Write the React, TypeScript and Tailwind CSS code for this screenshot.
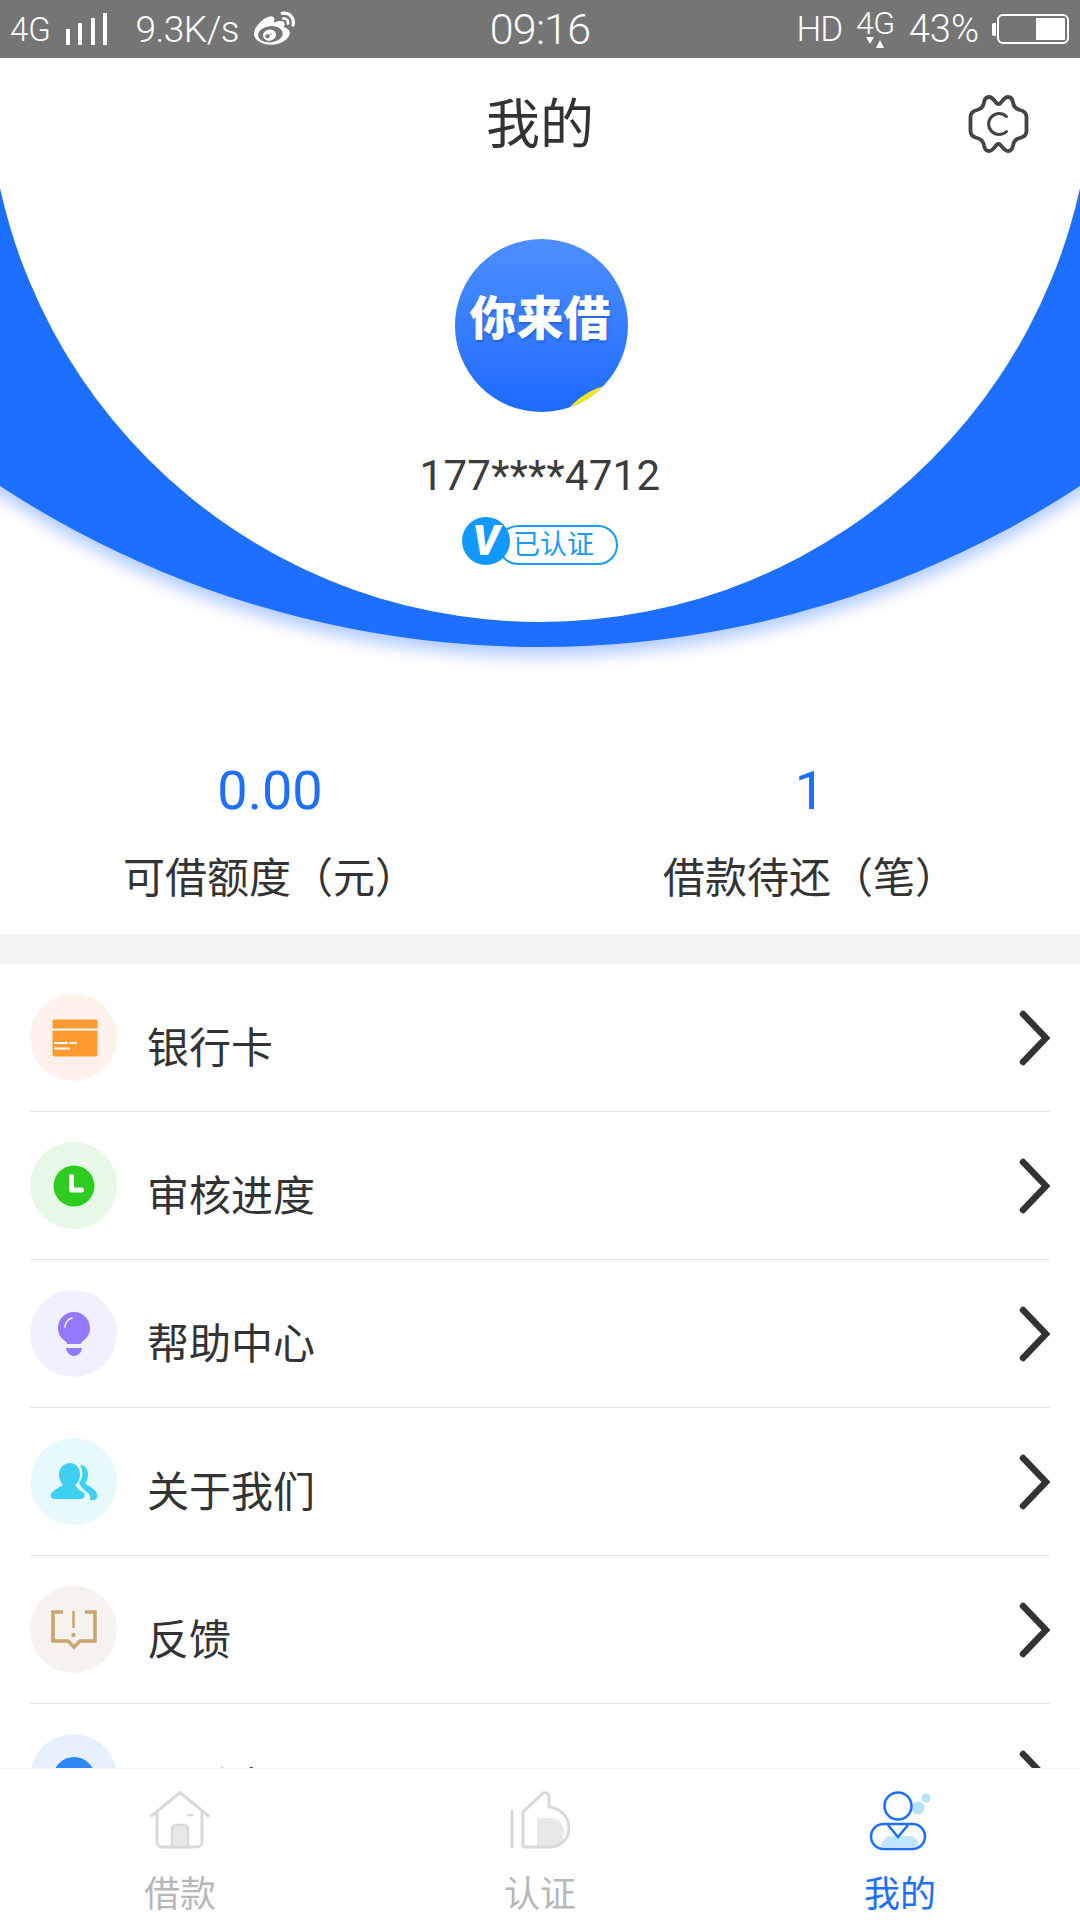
import React from "react";
import { FaWeibo } from "react-icons/fa";

const CardIcon = () => (
	<svg width="46" height="38" viewBox="0 0 46 38" className="ml-[3px]">
		<rect x="0.5" y="0.5" width="45" height="37" rx="2" fill="#ff9a33" />
		<rect x="0" y="9.5" width="46" height="2" fill="#fff" />
		<path d="M3 24h12M18 24h6M3 29.5h14" stroke="#fff" strokeWidth="2" strokeLinecap="round" />
	</svg>
);

const ClockIcon = () => (
	<svg width="42" height="42" viewBox="0 0 42 42">
		<circle cx="21" cy="21" r="20.5" fill="#2ecb20" />
		<path d="M18.500 11.500v13.500h10" fill="none" stroke="#fff" strokeWidth="5" strokeLinecap="round" strokeLinejoin="round" />
	</svg>
);

const BulbIcon = () => (
	<svg width="32" height="44" viewBox="0 0 32 44">
		<path d="M16 0C7 0 0 7 0 16c0 6 3 10 7 13 1.500 1 2 2 2 3h14c0-1 .5-2 2-3 4-3 7-7 7-13C32 7 25 0 16 0z" fill="#9479ff" />
		<path d="M8 36h16c0 4-4 8-8 8s-8-4-8-8z" fill="#9479ff" />
		<path d="M7 15c0-4 3-8 7-9" fill="none" stroke="#fff" strokeWidth="1.500" strokeLinecap="round" />
	</svg>
);

const PeopleIcon = () => (
	<svg width="48" height="38" viewBox="0 0 48 38">
		<path d="M20 0c6 0 10 5 10 11 0 5-2 9-5 11 2 3 5 6 9 8 1 1 1 6-3 6H5c-4 0-5-3-4-5 2-4 9-7 12-9-3-3-4-7-4-11C9 5 14 0 20 0z" fill="#3ed0f3" />
		<path d="M30 2c5 0 8 4 8 9 0 4-1 7-3 9 3 3 11 6 12 11 1 4-1 6-4 6h-3c1-3 0-6-3-8-4-3-6-5-8-9 3-4 4-8 3-12 0-2-1-4-2-6z" fill="#3ed0f3" />
	</svg>
);

const FeedbackIcon = () => (
	<svg width="46" height="40" viewBox="0 0 46 40">
		<path d="M12 2H2v29h15l6 6 6-6h15V2H34" fill="none" stroke="#c9a56f" strokeWidth="3.500" />
		<path d="M22.500 1v17" stroke="#c9a56f" strokeWidth="2.500" />
		<circle cx="22.500" cy="25" r="2.200" fill="#c9a56f" />
	</svg>
);

const ServiceIcon = () => <div className="h-[42px] w-[42px] rounded-full bg-[#2f86f6]" />;

const menu = [
	{ label: "银行卡", bg: "bg-[#fff2ec]", icon: <CardIcon /> },
	{ label: "审核进度", bg: "bg-[#e8f8e6]", icon: <ClockIcon /> },
	{ label: "帮助中心", bg: "bg-[#f2f0ff]", icon: <BulbIcon /> },
	{ label: "关于我们", bg: "bg-[#e8f9fe]", icon: <PeopleIcon /> },
	{ label: "反馈", bg: "bg-[#f6f3ee]", icon: <FeedbackIcon /> },
	{ label: "联系客服", bg: "bg-[#e6f1fd]", icon: <ServiceIcon /> },
];

const Chevron = () => (
	<svg width="34" height="56" viewBox="0 0 34 56" className="shrink-0">
		<path d="M7 4l23 24L7 52" fill="none" stroke="#333" strokeWidth="6.500" strokeLinecap="round" strokeLinejoin="miter" />
	</svg>
);

const StatusBar = () => (
	<div className="grid h-[58px] shrink-0 grid-cols-[1fr_auto_1fr] items-center bg-[#757575] font-light text-white">
		<div className="flex items-center pl-[10px]">
			<span className="text-[33px] leading-none">4G</span>
			<div className="ml-[15px] flex h-[32px] items-end gap-[8.500px]">
				<div className="h-[16px] w-[4px] bg-white" />
				<div className="h-[22px] w-[4px] bg-white" />
				<div className="h-[27px] w-[4px] bg-white" />
				<div className="h-[32px] w-[4px] bg-white" />
			</div>
			<span className="ml-[28px] text-[37px] leading-none tracking-[-0.5px]">9.3K/s</span>
			<FaWeibo className="ml-[15px] text-[41px]" />
		</div>
		<span className="text-[43px] leading-none tracking-[-0.8px]">09:16</span>
		<div className="flex items-center justify-end pr-[11px]">
			<span className="text-[35px] leading-none tracking-[-1px]">HD</span>
			<div className="ml-[14px] flex flex-col items-center">
				<span className="text-[32px] leading-[26px] tracking-[-0.5px]">4G</span>
				<svg width="22" height="11" viewBox="0 0 22 11" className="mt-[1px]">
					<path d="M2 0h8l-4 7zM12 11h8l-4-8z" fill="#fff" />
				</svg>
			</div>
			<span className="ml-[14px] text-[38px] leading-none">43%</span>
			<div className="ml-[13px] h-[13px] w-[4px] rounded-l-[2px] bg-white" />
			<div className="ml-[1px] flex h-[30px] w-[72px] justify-end rounded-[6px] border-2 border-white p-[2px]">
				<div className="w-[29px] bg-white" />
			</div>
		</div>
	</div>
);

const App: React.FC = () => {
	return (
		<div className="flex h-[1920px] w-[1080px] flex-col overflow-hidden bg-white font-['Roboto','Noto_Sans_CJK_SC',sans-serif] text-[#333]">
			<StatusBar />
			<div className="min-h-0 flex-1 overflow-hidden">
				<section className="relative h-[876px] overflow-hidden">
					{/* the blue crescent is two stacked circles */}
					<div className="absolute left-[-446px] top-[-1383px] h-[1972px] w-[1972px] rounded-full bg-[#1c6fff] shadow-[0_8px_18px_rgba(40,110,255,0.4)]" />
					<div className="absolute left-[-13px] top-[-542px] h-[1106px] w-[1106px] rounded-full bg-white" />

					<div className="relative flex flex-col">
						<div className="grid h-[132px] grid-cols-[1fr_auto_1fr] items-center">
							<div />
							<h1 className="mt-[3px] text-[54px] font-normal leading-none">我的</h1>
							<div className="justify-self-end pr-[50px]">
								<svg width="62" height="58" viewBox="19 13 62 58" className="block">
									<path
										d="M40 15C43 15 45 18 47 20.500C48.500 22.500 50.500 22.500 52 20.500C54 18 56 15 59 15C62 15 63.500 17.500 64 20.500C64.500 24 67 27 71 28C75 29 77.500 31 77.500 35L77.500 49C77.500 53 75 55 71 56C67 57 64.500 60 64 63.500C63.500 66.500 62 69 59 69C56 69 54 66 52 63.500C50.500 61.500 48.500 61.500 47 63.500C45 66 43 69 40 69C37 69 35.500 66.500 35 63.500C34.500 60 32 57 28 56C24 55 21.500 53 21.500 49L21.500 35C21.500 31 24 29 28 28C32 27 34.500 24 35 20.500C35.500 17.500 37 15 40 15Z"
										fill="none"
										stroke="#444"
										strokeWidth="3.800"
									/>
									<path d="M57.500 34.500a10.500 10.500 0 1 0 0 15" fill="none" stroke="#444" strokeWidth="3" strokeLinecap="round" />
								</svg>
							</div>
						</div>

						<div className="relative ml-[455px] mt-[49px] flex h-[173px] w-[173px] items-center justify-center overflow-hidden rounded-full bg-gradient-to-b from-[#4d8eff] to-[#1c6aff]">
							<svg width="173" height="173" viewBox="0 0 173 173" className="absolute left-0 top-0">
								<path d="M100 173Q112 172 118 165Q132 151 152 146L175 175H100Z" fill="#f5e90f" />
							</svg>
							<span className="relative -ml-[3px] -mt-[14px] text-[47px] font-black leading-none text-white [text-shadow:1px_2px_2px_rgba(0,40,150,0.3)]">你来借</span>
						</div>

						<div className="mt-[40px] text-center text-[42px] font-normal leading-[48px] tracking-[0.3px] text-[#3c3c3c]">177****4712</div>

						<div className="mx-auto mt-[17px] flex items-end">
							<div className="z-10 -mr-[12px] flex h-[48px] w-[48px] items-center justify-center rounded-full bg-[#1398ff] text-[42px] font-black italic leading-none text-white">V</div>
							<div className="flex h-[40px] w-[120px] items-center rounded-full border-2 border-[#1a9cff] pl-[13px] text-[27px] leading-none text-[#1a9cff]">已认证</div>
						</div>

						<div className="mt-[196px] grid grid-cols-2 text-center">
							<div>
								<div className="text-[54px] font-normal leading-[60px] text-[#1c6fff]">0.00</div>
								<div className="mt-[30px] text-[42px] leading-[56px]">可借额度（元）</div>
							</div>
							<div>
								<div className="text-[54px] font-normal leading-[60px] text-[#1c6fff]">1</div>
								<div className="mt-[30px] text-[42px] leading-[56px]">借款待还（笔）</div>
							</div>
						</div>
					</div>
				</section>

				<div className="h-[30px] bg-[#f5f5f5]" />

				<div className="px-[30px]">
					{menu.map((item) => (
						<div key={item.label} className="flex h-[148px] items-center border-b border-[#e3e3e3]">
							<div className={`flex h-[87px] w-[87px] shrink-0 items-center justify-center rounded-full ${item.bg}`}>
								{item.icon}
							</div>
							<span className="ml-[30px] mt-[22px] flex-1 text-[42px] leading-none">{item.label}</span>
							<Chevron />
						</div>
					))}
				</div>
			</div>

			<nav className="grid h-[152px] shrink-0 grid-cols-3 border-t border-[#eee] bg-white text-[36px] leading-none text-[#b8b8b8]">
				<div className="flex flex-col items-center pt-[22px]">
					<svg width="60" height="60" viewBox="0 0 60 60">
						<path d="M1.500 25L30 1.500 58.500 25" fill="none" stroke="#d9d9d9" strokeWidth="3" strokeLinecap="round" strokeLinejoin="round" />
						<path d="M7 20v31a5 5 0 0 0 5 5h35a5 5 0 0 0 5-5V20" fill="none" stroke="#d9d9d9" strokeWidth="3" />
						<path d="M22 56V38a4 4 0 0 1 4-4h8a4 4 0 0 1 4 4v18z" fill="#e8e8e8" stroke="#d9d9d9" strokeWidth="2.500" />
						<path d="M37 24h6" stroke="#d9d9d9" strokeWidth="2.500" />
					</svg>
					<span className="mt-[26px]">借款</span>
				</div>
				<div className="flex flex-col items-center pt-[22px]">
					<svg width="60" height="60" viewBox="0 0 60 60">
						<path d="M27 27h14c8 0 13 6 13 14.500S48 56 40 56H27z" fill="#e8e8e8" />
						<path d="M2 19v38" stroke="#d9d9d9" strokeWidth="3" />
						<path d="M13 56V21L32 3c3-3 7-1 7 3v10c11 1 20 10 20 21 0 11-9 19-19 19z" fill="none" stroke="#d9d9d9" strokeWidth="3" strokeLinejoin="round" />
					</svg>
					<span className="mt-[26px]">认证</span>
				</div>
				<div className="flex flex-col items-center pt-[22px] text-[#1c6fff]">
					<svg width="62" height="62" viewBox="0 0 62 62">
						<circle cx="49" cy="17" r="6.500" fill="#b5e2fd" />
						<circle cx="57" cy="7" r="4.500" fill="#b5e2fd" />
						<path d="M12 56c0-8 7-11 10-11h18c3 0 10 3 10 11z" fill="#bfe6ff" />
						<circle cx="29" cy="15" r="13.500" fill="none" stroke="#1c6fff" strokeWidth="2.500" />
						<rect x="2" y="33" width="54" height="25" rx="12.500" fill="none" stroke="#1c6fff" strokeWidth="2.500" />
						<path d="M19 34l10 12 10-12" fill="none" stroke="#1c6fff" strokeWidth="2.500" />
					</svg>
					<span className="mt-[24px]">我的</span>
				</div>
			</nav>
		</div>
	);
};

export default App;
